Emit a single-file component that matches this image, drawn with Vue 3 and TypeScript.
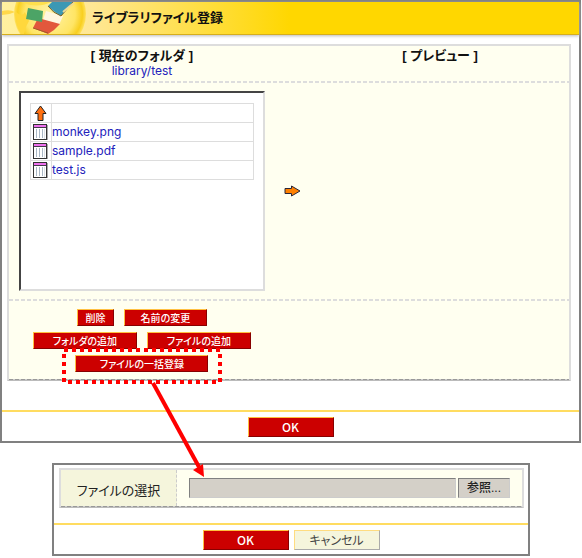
<script setup lang="ts">
import { ref } from 'vue'

const files = ref<string[]>(['monkey.png', 'sample.pdf', 'test.js'])
const selectedPath = ref<string>('')
</script>

<template>
  <div class="page">
    <main class="window">
      <header class="titlebar">
        <svg class="emblem" viewBox="0 0 90 32" aria-hidden="true">
          <defs>
            <radialGradient id="orb" cx="0.5" cy="0.5" r="0.5">
              <stop offset="0" stop-color="#fff3a8" />
              <stop offset="0.7" stop-color="#ffe565" />
              <stop offset="0.9" stop-color="#f8cf20" />
              <stop offset="1" stop-color="#ffe15c" />
            </radialGradient>
          </defs>
          <path d="M0 9 Q8 7 13 10 Q7 13 0 13Z" fill="#ffd84a" />
          <circle cx="48" cy="12" r="36" fill="url(#orb)" />
          <path d="M14 10 Q20 16 23 10 L27 19 Q23 25 22 32 L19 32 Q13 20 14 10Z" fill="#ffd83c" />
          <path d="M19 0 Q35 7 49 0Z" fill="#ffe04d" />
          <path d="M44 9 L61 14 L57 23 L41 18Z" fill="#fff6df" />
          <path d="M50 0 L71 0 L59 14 Q52 10 46 4Z" fill="#3c98b4" />
          <path d="M46 4 Q51 11 59 14 L71 0" fill="none" stroke="#75602c" />
          <path d="M36 16 L58 22 L52 28 L46 32 L31 26Z" fill="#e2573c" />
          <path d="M31 26 L46 31" fill="none" stroke="#a35b2a" />
          <path d="M26 6 L41 9 L40 20 L24 17Z" fill="#4ca466" />
          <path d="M61 10 L68 4 L72 1" fill="none" stroke="#ecd997" stroke-width="2" />
        </svg>
        <h1>ライブラリファイル登録</h1>
      </header>

      <section class="panel">
        <div class="columns heads">
          <div class="head">
            <h2>[ 現在のフォルダ ]</h2>
            <p class="path">library/test</p>
          </div>
          <div class="head preview-head">
            <h2>[ プレビュー ]</h2>
          </div>
        </div>

        <div class="columns browser">
          <div class="listbox">
            <table aria-label="library/test">
              <tbody>
                <tr>
                  <td class="icon-cell">
                    <svg class="up-icon" viewBox="0 0 13 17" aria-hidden="true">
                      <path d="M6.5 1 L12 8.5 H9 V15.5 H4 V8.5 H1Z" fill="#ff6f0f" stroke="#222" />
                    </svg>
                  </td>
                  <td></td>
                </tr>
                <tr v-for="file in files" :key="file">
                  <td class="icon-cell">
                    <svg class="file-icon" viewBox="0 0 15 16" aria-hidden="true">
                      <rect x="0.5" y="0.5" width="13" height="15" fill="#fff" stroke="#333" />
                      <path d="M1 2H13" stroke="#ee70ee" stroke-width="2" />
                      <path d="M1 3.5H13" stroke="#44384c" />
                      <path d="M3.5 5V14M6.5 5V14M9.5 5V14" stroke="#a9b7c5" />
                      <path d="M11.5 5V15" stroke="#dde2e8" />
                      <path d="M14.5 1V16" stroke="#aaa" />
                    </svg>
                  </td>
                  <td><a href="#">{{ file }}</a></td>
                </tr>
              </tbody>
            </table>
          </div>
          <svg class="next-icon" viewBox="0 0 17 12" aria-hidden="true">
            <path d="M1 3.5 H7.5 V1 L16 6 L7.5 11 V8.5 H1Z" fill="#ff8000" stroke="#29273a" />
          </svg>
          <div class="preview"></div>
        </div>

        <div class="columns">
          <div class="actions">
            <div class="action-row">
              <button type="button" class="btn small w-short">削除</button>
              <button type="button" class="btn small w-medium">名前の変更</button>
            </div>
            <div class="action-row">
              <button type="button" class="btn small w-long">フォルダの追加</button>
              <button type="button" class="btn small w-long">ファイルの追加</button>
            </div>
            <div class="callout">
              <button type="button" class="btn small w-wide">ファイルの一括登録</button>
              <svg class="callout-mark" viewBox="0 0 160 132" aria-hidden="true">
                <rect x="2" y="2" width="156" height="32" fill="none" stroke="#f00" stroke-width="4" stroke-dasharray="4 4" />
                <path d="M91 35 L137 119" stroke="#f00" stroke-width="4" />
                <path d="M142 129 L131 122 L141 116Z" fill="#f00" />
              </svg>
            </div>
          </div>
        </div>
      </section>

      <footer class="footer">
        <button type="button" class="btn">OK</button>
      </footer>
    </main>

    <section class="window dialog">
      <div class="field">
        <label for="upload-path">ファイルの選択</label>
        <div class="picker">
          <input id="upload-path" v-model="selectedPath" type="text" />
          <button type="button" class="browse">参照...</button>
        </div>
      </div>
      <footer class="footer">
        <button type="button" class="btn">OK</button>
        <button type="button" class="btn plain">キャンセル</button>
      </footer>
    </section>
  </div>
</template>

<style>
body {
  background: #fff;
}
</style>

<style scoped>
.page {
  padding-right: 1px;
  color: #222;
  font-family: "Liberation Sans", "Noto Sans CJK JP", sans-serif;
  font-size: 13px;
  line-height: 16px;
  font-feature-settings: "palt";
}
.page * {
  box-sizing: border-box;
}
.window {
  border: 2px solid #808080;
  background: #fff;
}
.titlebar {
  display: flex;
  align-items: center;
  height: 33px;
  border-bottom: 1px solid #d6ae1c;
  background: linear-gradient(90deg, #fff1a0 0, #ffe794 90px, #ffd700 50%);
  box-shadow: 0 1px 3px #bbb;
}
.emblem {
  width: 90px;
  height: 32px;
}
h1,
h2,
p {
  margin: 0;
}
h1 {
  color: #111;
  font-size: 13px;
  font-weight: 700;
}
h2 {
  color: #111;
  font-size: 13px;
  font-weight: 700;
  line-height: 16px;
}
.panel {
  margin: 9px 8px 0 5px;
  border: 2px solid #ddd;
  border-bottom: 1px solid #bbb;
  background: repeating-linear-gradient(90deg, #999 0 4px, #ccc 4px 6px) left bottom / 100% 1px no-repeat #fffff0;
}
.columns {
  display: grid;
  grid-template-columns: minmax(0, 1.03fr) 36px minmax(0, 1fr);
}
.heads,
.browser {
  padding-bottom: 2px;
  background: repeating-linear-gradient(90deg, #ddd 0 4px, #fffff0 4px 6px) left bottom / 100% 2px no-repeat;
}
.heads {
  height: 37px;
  padding-top: 2px;
  text-align: center;
}
.preview-head {
  grid-column: 3;
}
.path {
  color: #22b;
  font-family: Inter, sans-serif;
  font-size: 12px;
  line-height: 13px;
}
.browser {
  align-items: center;
  height: 218px;
}
.listbox {
  height: 200px;
  margin: 0 10px;
  padding: 10px 9px;
  border: 2px solid;
  border-color: #444 #ddd #ddd #444;
  background: #fff;
}
table {
  width: 100%;
  border-collapse: collapse;
}
td {
  height: 19px;
  padding: 0;
  border: 1px solid #ddd;
  line-height: 16px;
}
.icon-cell {
  width: 21px;
  padding-right: 2px;
}
td svg {
  display: block;
  margin: 0 auto;
}
.up-icon {
  width: 13px;
  height: 17px;
}
.file-icon {
  width: 15px;
  height: 16px;
}
td a {
  color: #22b;
  font-family: Inter, sans-serif;
  font-size: 12px;
  text-decoration: none;
}
.next-icon {
  width: 17px;
  height: 12px;
  justify-self: center;
}
.actions {
  display: flex;
  flex-direction: column;
  align-items: center;
  gap: 6px;
  padding: 8px 0;
}
.action-row {
  display: flex;
  gap: 10px;
}
.btn {
  width: 86px;
  height: 20px;
  padding: 0;
  border: 1px solid;
  border-color: #ffc040 #800 #800 #ffc040;
  background: #c00;
  color: #fff;
  font: 500 12px/16px "Noto Sans CJK JP", sans-serif;
  font-feature-settings: inherit;
  white-space: nowrap;
}
.btn.small {
  height: 17px;
  font-size: 10px;
  line-height: 14px;
}
.btn.w-short {
  width: 37px;
}
.btn.w-medium {
  width: 83px;
}
.btn.w-long {
  width: 104px;
}
.btn.w-wide {
  width: 133px;
}
.btn.plain {
  border-color: #ffdc80 #aaa #aaa #ffdc80;
  background: #f5f5dc;
  color: #444;
  font-weight: 400;
}
.callout {
  position: relative;
}
.callout-mark {
  position: absolute;
  top: -7px;
  left: -13px;
  width: 160px;
  height: 132px;
  pointer-events: none;
}
.footer {
  display: flex;
  justify-content: center;
  gap: 5px;
  margin-top: 29px;
  padding: 5px 0 4px;
  border-top: 2px solid #ffdc60;
}
.dialog {
  margin: 20px 51px 0 52px;
}
.field {
  display: flex;
  height: 40px;
  margin: 3px 4px 0 5px;
  padding-bottom: 1px;
  border: 2px solid #ddd;
  border-bottom: 1px solid #bbb;
  background: repeating-linear-gradient(90deg, #999 0 4px, #ccc 4px 6px) left bottom / 100% 1px no-repeat #fffff0;
}
.field label {
  display: flex;
  align-items: center;
  justify-content: center;
  width: 116px;
  padding-top: 6px;
  border-right: 1px dashed #ccc;
  background: #f5f5dc;
}
.picker {
  display: flex;
  flex: 1;
  align-items: center;
  gap: 2px;
  padding: 0 12px;
}
.picker input,
.browse {
  height: 20px;
  border: 1px solid;
  border-color: #808080 #ccc #ccc #808080;
  background: #d4d0c8;
}
.picker input {
  flex: 1;
  min-width: 0;
}
.browse {
  width: 52px;
  padding: 0;
  color: #222;
  font: 500 12px/16px "Liberation Sans", "Noto Sans CJK JP", sans-serif;
}
.dialog .footer {
  margin-top: 15px;
}
</style>
